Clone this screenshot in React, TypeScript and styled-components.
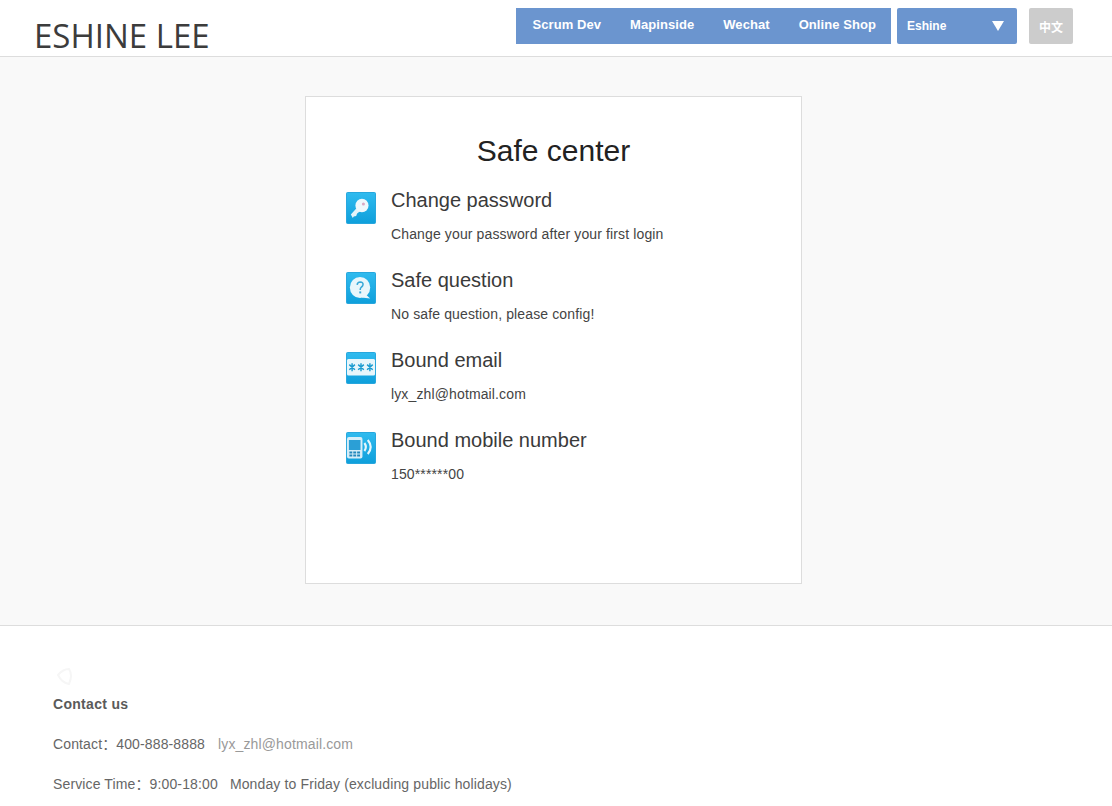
import React from 'react'
import styled, { createGlobalStyle } from 'styled-components'

const GlobalStyle = createGlobalStyle`
  html, body {
    margin: 0;
    padding: 0;
    background: #fff;
    font-family: "Liberation Sans", Arial, sans-serif;
  }
  * { box-sizing: border-box; }
`

const Header = styled.header`
  height: 57px;
  display: flex;
  justify-content: space-between;
  border-bottom: 1px solid #ddd;
  padding: 8px 39px 0 34px;
  background: #fff;
`
const Logo = styled.h1`
  margin: 0;
  padding-top: 7px;
  font-family: "Open Sans", sans-serif;
  font-weight: 400;
  font-size: 33px;
  line-height: 42px;
  color: #3c3c3c;
`
const HeaderRight = styled.div`
  display: flex;
  align-items: flex-start;
`
const Nav = styled.nav`
  display: flex;
  gap: 29px;
  height: 36px;
  padding: 0 15px 0 16px;
  background: #6b95cf;
`
const NavItem = styled.a`
  line-height: 33px;
  font-size: 13px;
  font-weight: 700;
  letter-spacing: 0.07px;
  color: #fff;
  white-space: nowrap;
`
const UserSelect = styled.div`
  width: 120px;
  height: 36px;
  margin-left: 6px;
  padding: 0 13px 0 10px;
  display: flex;
  align-items: center;
  justify-content: space-between;
  border-radius: 2px;
  background: #6b95cf;
  color: #fff;
  font-size: 12px;
  font-weight: 700;
`
const LangButton = styled.button`
  width: 44px;
  height: 36px;
  margin-left: 12px;
  padding: 0;
  border: 0;
  border-radius: 2px;
  background: #ccc;
  color: #fff;
  font-family: "Liberation Sans", "Noto Sans CJK SC", sans-serif;
  font-size: 12px;
  font-weight: 700;
`

const Main = styled.main`
  height: 569px;
  padding-top: 39px;
  background: #f9f9f9;
  border-bottom: 1px solid #ddd;
`
const Card = styled.section`
  width: 497px;
  height: 488px;
  margin-left: 305px;
  padding: 34px 40px 0;
  background: #fff;
  border: 1px solid #ddd;
`
const Title = styled.h2`
  margin: 0 0 17px;
  font-size: 30px;
  font-weight: 400;
  line-height: 40px;
  text-align: center;
  color: #222;
`
const Row = styled.div`
  display: flex;
  height: 80px;
`
const IconBox = styled.div`
  flex: none;
  width: 31px;
  height: 32px;
  margin: 4px 14px 0 0;
  svg { display: block; }
`
const RowTitle = styled.div`
  font-size: 20px;
  line-height: 24px;
  color: #3a3a3a;
`
const RowText = styled.div`
  margin-top: 13px;
  font-size: 14px;
  line-height: 18px;
  letter-spacing: 0.13px;
  color: #444;
`

const Footer = styled.footer`
  padding: 41px 53px 0;
  background: #fff;
  color: #666;
  font-size: 14px;
  letter-spacing: 0.13px;
  font-family: "Liberation Sans", "Noto Sans CJK SC", sans-serif;
`
const FadedMark = styled.div`
  height: 20px;
  margin-left: 2px;
  svg { display: block; }
`
const FooterHead = styled.div`
  margin-top: 7px;
  line-height: 20px;
  font-weight: 700;
  letter-spacing: 0.3px;
  color: #5a5a5a;
`
const FooterLine = styled.div`
  margin-top: 20px;
  line-height: 20px;
  white-space: pre;
`
const Mail = styled.a`
  margin-left: 13px;
  color: #999;
`

const Tile: React.FC<{ children: React.ReactNode }> = ({ children }) => (
  <svg width="30" height="32" viewBox="0 0 31 32" preserveAspectRatio="none">
    <defs>
      <linearGradient id="tile" x1="0" y1="0" x2="0" y2="1">
        <stop offset="0" stopColor="#30bbef" />
        <stop offset="1" stopColor="#0e9fdb" />
      </linearGradient>
    </defs>
    <rect x="0.5" y="0.5" width="30" height="31" rx="1" fill="url(#tile)" stroke="#25a5dc" />
    {children}
  </svg>
)

const KeyIcon = () => (
  <Tile>
    <path d="M5 22.5 L12 15 L15.5 18.5 L11.5 21.5 L10.5 24 L8 24.5 L7 26 Z" fill="#e4f3f9" />
    <circle cx="16.5" cy="13.5" r="6.8" fill="#eef8fc" />
    <circle cx="18" cy="12" r="1.6" fill="#d9a9c4" />
  </Tile>
)
const QuestionIcon = () => (
  <Tile>
    <circle cx="14.5" cy="15.5" r="10.5" fill="#e9f6fb" />
    <path d="M20 22 L25 26.5 L16 25.5 Z" fill="#e9f6fb" />
    <path d="M11.5 12.8 Q11.8 10 14.8 10 Q17.8 10.2 17.6 12.6 Q17.4 14.2 15.8 15.2 Q14.7 16 14.7 18" fill="none" stroke="#3aa9d8" strokeWidth="1.6" />
    <rect x="13.7" y="19.4" width="2" height="2" fill="#3aa9d8" />
  </Tile>
)
const StarsIcon = () => (
  <Tile>
    <rect x="1" y="7" width="29" height="16.5" rx="1.5" fill="#e8f6fb" />
    <path d="M3.4 12.6 L9.2 17.8 M9.2 12.6 L3.4 17.8 M6.3 11.2 L6.3 19.2 M12.6 12.6 L18.4 17.8 M18.4 12.6 L12.6 17.8 M15.5 11.2 L15.5 19.2 M21.8 12.6 L27.6 17.8 M27.6 12.6 L21.8 17.8 M24.7 11.2 L24.7 19.2" stroke="#1b9bd0" strokeWidth="1.5" />
  </Tile>
)
const PhoneIcon = () => (
  <Tile>
    <rect x="1" y="5" width="16" height="21.5" rx="2" fill="#d7eef8" />
    <rect x="3" y="8" width="12" height="10" fill="#2b9fd6" />
    <path d="M3.5 19.5h3v2h-3zM7.5 19.5h3v2h-3zM11.5 19.5h3v2h-3zM3.5 22.5h3v2h-3zM7.5 22.5h3v2h-3zM11.5 22.5h3v2h-3z" fill="#2387bb" />
    <path d="M19 11 Q22 15 19 19 M22.5 8 Q28.5 15 22.5 22" fill="none" stroke="#e6f6fc" strokeWidth="2.2" />
  </Tile>
)

const items = [
  { icon: <KeyIcon />, title: 'Change password', text: 'Change your password after your first login' },
  { icon: <QuestionIcon />, title: 'Safe question', text: 'No safe question, please config!' },
  { icon: <StarsIcon />, title: 'Bound email', text: 'lyx_zhl@hotmail.com' },
  { icon: <PhoneIcon />, title: 'Bound mobile number', text: '150******00' },
]

const App: React.FC = () => (
  <>
    <GlobalStyle />
    <Header>
      <Logo>ESHINE LEE</Logo>
      <HeaderRight>
        <Nav>
          <NavItem>Scrum Dev</NavItem>
          <NavItem>Mapinside</NavItem>
          <NavItem>Wechat</NavItem>
          <NavItem>Online Shop</NavItem>
        </Nav>
        <UserSelect>
          Eshine
          <svg width="12" height="10" viewBox="0 0 12 10"><path d="M0 0H12L6 10Z" fill="#fff" /></svg>
        </UserSelect>
        <LangButton>中文</LangButton>
      </HeaderRight>
    </Header>
    <Main>
      <Card>
        <Title>Safe center</Title>
        {items.map(item => (
          <Row key={item.title}>
            <IconBox>{item.icon}</IconBox>
            <div>
              <RowTitle>{item.title}</RowTitle>
              <RowText>{item.text}</RowText>
            </div>
          </Row>
        ))}
      </Card>
    </Main>
    <Footer>
      <FadedMark>
        <svg width="20" height="20" viewBox="0 0 20 20">
          <path d="M3 8 Q8 2 14 2 Q18 8 14 17 Q7 16 3 8Z" fill="none" stroke="#f6f6f6" strokeWidth="2" />
        </svg>
      </FadedMark>
      <FooterHead>Contact us</FooterHead>
      <FooterLine>Contact：400-888-8888<Mail>lyx_zhl@hotmail.com</Mail></FooterLine>
      <FooterLine>Service Time：9:00-18:00   Monday to Friday (excluding public holidays)</FooterLine>
    </Footer>
  </>
)

export default App
